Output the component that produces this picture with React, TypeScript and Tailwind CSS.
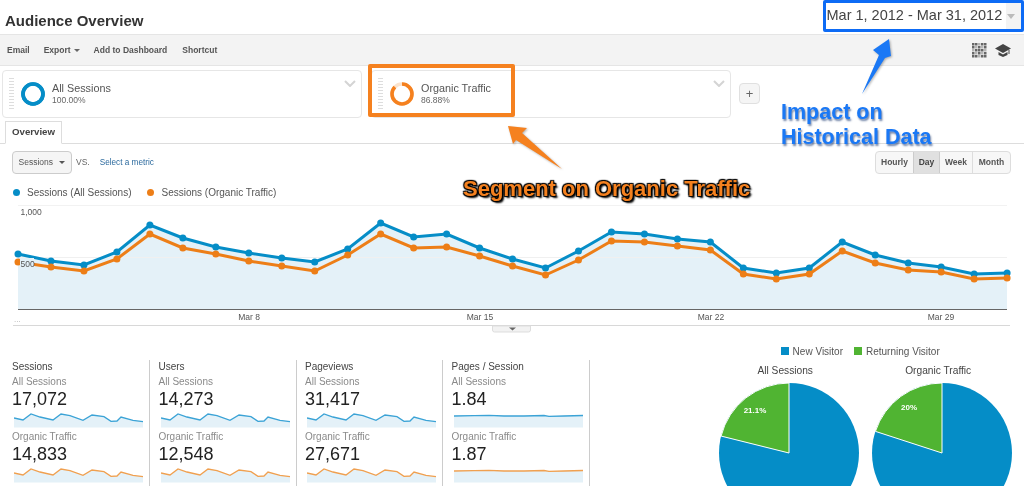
const BLUE = "#058dc7";
const ORANGE = "#ed7e17";

const BLUE_Y = [254, 261, 265, 252, 225, 238, 247, 253, 258, 262, 249, 223, 237, 234, 248, 259, 268, 251, 232, 234, 239, 242, 268, 273, 268, 242, 255, 263, 267, 274, 273];
const ORANGE_Y = [262, 267, 271, 259, 234, 248, 254, 261, 266, 271, 255, 234, 248, 247, 256, 266, 275, 260, 241, 242, 246, 250, 274, 279, 274, 251, 263, 270, 272, 279, 278];

const SPARK: [number, number][] = [[0, 5], [9, 7], [17, 1], [26, 4], [39, 7], [47, 1], [56, 2.7], [69, 7.3], [78, 2], [90, 3.700], [97, 8.3], [103, 8], [107, 4], [119, 7.3], [129, 8.7]];
const FLAT: [number, number][] = [[0, 3], [20, 2.7], [35, 2.3], [50, 3], [70, 3], [90, 2.5], [95, 3.3], [110, 3], [129, 2.5]];

const METRICS = [
  { title: "Sessions", all: "17,072", organic: "14,833", data: SPARK },
  { title: "Users", all: "14,273", organic: "12,548", data: SPARK },
  { title: "Pageviews", all: "31,417", organic: "27,671", data: SPARK },
  { title: "Pages / Session", all: "1.84", organic: "1.87", data: FLAT },
];

// dots of the little grid icon in the toolbar, 0 means a lighter one
const QR = [1, 1, 0, 1, 1, 1, 0, 1, 0, 1, 0, 1, 1, 1, 0, 1, 0, 1, 0, 1, 1, 1, 0, 1, 1];

function xAt(i: number) {
  return 18 + i * 32.97;
}

function points(ys: number[]) {
  return ys.map((y, i) => `${xAt(i)},${y - 205}`).join(" ");
}

function Spark({ data, color }: { data: [number, number][]; color: string }) {
  const line = data.map(([x, y]) => `${x},${y}`).join(" ");
  return (
    <svg width="130" height="15" className="block ml-[2px]">
      <polygon points={`0,14.500 ${line} 129,14.500`} fill="#e4f1f8" />
      <polyline points={line} fill="none" stroke={color} strokeWidth="1.3" />
    </svg>
  );
}

function MetricColumn({ title, all, organic, data }: (typeof METRICS)[number]) {
  return (
    <div className="w-[146.5px] border-r border-[#cccccc] pl-[8.5px] h-[126px]">
      <div className="text-[10px] leading-[14px] text-[#444444]">{title}</div>
      <div className="text-[10px] leading-[16px] text-[#8a8a8a]">All Sessions</div>
      <div className="text-[18px] leading-[18px] text-[#222222]">{all}</div>
      <div className="mt-[5px]">
        <Spark data={data} color="#3ba3d6" />
      </div>
      <div className="mt-[1px] text-[10px] leading-[16px] text-[#8a8a8a]">Organic Traffic</div>
      <div className="text-[18px] leading-[18px] text-[#222222]">{organic}</div>
      <div className="mt-[5px]">
        <Spark data={data} color="#f0a050" />
      </div>
    </div>
  );
}

function Donut({ color, share }: { color: string; share: number }) {
  const c = 2 * Math.PI * 10;
  return (
    <svg width="26" height="26" viewBox="0 0 26 26" className="shrink-0">
      <circle cx="13" cy="13" r="10" fill="none" stroke={share < 1 ? "#fbe3cd" : color} strokeWidth="3.6" />
      <circle
        cx="13"
        cy="13"
        r="10"
        fill="none"
        stroke={color}
        strokeWidth="3.6"
        strokeDasharray={`${c * share} ${c}`}
        transform="rotate(-90 13 13)"
      />
    </svg>
  );
}

function SegmentCard({ name, pct, color, share }: { name: string; pct: string; color: string; share: number }) {
  return (
    <div className="relative w-[360px] h-[48px] border border-[#e6e6e6] rounded-sm flex items-center pl-[6px] gap-[5.5px]">
      <div className="w-[5px] h-[32px] bg-[repeating-linear-gradient(to_bottom,#dddddd_0,#dddddd_1px,transparent_1px,transparent_3px)]" />
      <Donut color={color} share={share} />
      <div className="ml-[1px]">
        <div className="text-[10.8px] leading-[13px] text-[#555555]">{name}</div>
        <div className="text-[8.5px] leading-[11px] text-[#666666]">{pct}</div>
      </div>
      <svg width="12" height="7" className="absolute right-[5px] top-[9px]">
        <path d="M1 1l5 5 5-5" fill="none" stroke="#d4d4d4" strokeWidth="2" />
      </svg>
    </div>
  );
}

function Pie({ title, angle, label, lx, ly }: { title: string; angle: number; label: string; lx: string; ly: string }) {
  const r = 70;
  const a = (angle * Math.PI) / 180;
  const x = 70 - r * Math.sin(a);
  const y = 70 - r * Math.cos(a);
  return (
    <div className="w-[153px] flex flex-col items-center">
      <div className="text-[10.2px] leading-[13px] text-[#444444] mb-[5px] mr-[7px]">{title}</div>
      <svg width="142" height="142" viewBox="-1 -1 142 142" className="shrink-0">
        <circle cx="70" cy="70" r={r} fill={BLUE} />
        <path d={`M70 70L70 0A70 70 0 0 0 ${x} ${y}Z`} fill="#50b432" stroke="#ffffff" strokeWidth="1" />
        <text x={lx} y={ly} fill="#ffffff" fontSize="8" fontWeight="700" textAnchor="middle">
          {label}
        </text>
      </svg>
    </div>
  );
}

export default function App() {
  return (
    <div className="relative w-[1024px] h-[486px] overflow-hidden bg-white font-['Liberation_Sans',Arial,sans-serif] blur-[0.4px]">
      {/* header */}
      <div className="h-[35px] flex items-center pl-[5px] pt-[8px] border-b border-[#e5e5e5]">
        <h1 className="text-[15px] font-bold text-[#333333]">Audience Overview</h1>
      </div>

      {/* toolbar */}
      <div className="h-[31px] bg-[#f3f3f3] border-b border-[#e5e5e5] flex items-center pl-[7px] pr-[13px] text-[8.5px] font-bold text-[#555555]">
        <span>Email</span>
        <span className="ml-[14px]">Export</span>
        <span className="ml-[3px] border-x-[3px] border-t-[3px] border-x-transparent border-t-[#666666]" />
        <span className="ml-[14px]">Add to Dashboard</span>
        <span className="ml-[15px]">Shortcut</span>
        <svg width="15" height="15" viewBox="0 0 15 15" className="ml-auto">
          {QR.map((on, i) => (
            <rect
              key={i}
              x={(i % 5) * 3}
              y={Math.floor(i / 5) * 3}
              width="2.500"
              height="2.500"
              fill={on ? "#666666" : "#b5b5b5"}
            />
          ))}
        </svg>
        <svg width="16" height="13" viewBox="0 0 16 13" className="ml-[8px]">
          <path d="M0 4.500L8 0l8 4.500-8 4.500zM3.500 8l4.500 2.500L12.500 8v3L8 13l-4.500-2z" fill="#444444" />
          <path d="M14 6v4" stroke="#444444" strokeWidth="1" />
        </svg>
      </div>

      {/* segments */}
      <div className="h-[55px] pt-[4px] pl-[2px] flex items-start">
        <SegmentCard name="All Sessions" pct="100.00%" color="#058dc7" share={1} />
        <div className="w-[9px]" />
        <SegmentCard name="Organic Traffic" pct="86.88%" color="#f5811f" share={0.8688} />
        <button className="ml-[8px] mt-[13px] w-[21px] h-[21px] border border-[#e0e0e0] bg-[#f5f5f5] rounded-sm text-[13px] leading-[18px] text-[#666666]">
          +
        </button>
      </div>

      {/* tabs */}
      <div className="h-[23px] pl-[5px] border-b border-[#dddddd] flex">
        <div className="w-[57px] h-[23px] border border-b-white border-[#dddddd] text-center text-[9.7px] font-bold leading-[20px] text-[#444444] bg-white">
          Overview
        </div>
      </div>

      {/* chart controls */}
      <div className="h-[30px] pt-[7px] pl-[12px] pr-[13px] flex items-start">
        <div className="w-[60px] h-[23px] border border-[#cccccc] rounded-sm bg-[#f5f5f5] flex items-center justify-between pl-[5.5px] pr-[6px] text-[8.5px] text-[#555555]">
          Sessions
          <span className="border-x-[3px] border-t-[3px] border-x-transparent border-t-[#555555]" />
        </div>
        <span className="ml-[4px] mt-[5px] text-[8.5px] text-[#666666]">VS.</span>
        <span className="ml-[10px] mt-[6px] text-[8.2px] text-[#2c6a9e]">Select a metric</span>
        <div className="ml-auto flex h-[23px] border border-[#dddddd] rounded-sm bg-[#f7f7f7] text-[8.5px] font-bold text-[#555555] leading-[21px] text-center">
          <span className="w-[37px]">Hourly</span>
          <span className="w-[27px] bg-[#e0e0e0] border-x border-[#cccccc] text-[#444444]">Day</span>
          <span className="w-[33px] border-r border-[#dddddd]">Week</span>
          <span className="w-[37px]">Month</span>
        </div>
      </div>

      {/* legend */}
      <div className="h-[31px] flex items-center gap-[16px] pl-[13px] pt-[6px] text-[10px] text-[#555555]">
        <span className="flex items-center gap-[7px]">
          <span className="w-[7px] h-[7px] rounded-full bg-[#058dc7]" />
          Sessions (All Sessions)
        </span>
        <span className="flex items-center gap-[7px]">
          <span className="w-[7px] h-[7px] rounded-full bg-[#ed7e17]" />
          Sessions (Organic Traffic)
        </span>
      </div>

      {/* main chart */}
      <svg width="1024" height="128" className="block">
        <line x1="18" x2="1007" y1="0.500" y2="0.500" stroke="#f2f2f2" />
        <polygon points={`18,104 ${points(BLUE_Y)} 1007,104`} fill="#e4f1f8" />
        <line x1="18" x2="1007" y1="52.500" y2="52.500" stroke="#f0f0f0" />
        <line x1="18" x2="1007" y1="104.500" y2="104.500" stroke="#666666" />
        <polyline points={points(BLUE_Y)} fill="none" stroke={BLUE} strokeWidth="3" />
        {BLUE_Y.map((y, i) => (
          <circle key={i} cx={xAt(i)} cy={y - 205} r="3.500" fill={BLUE} />
        ))}
        <polyline points={points(ORANGE_Y)} fill="none" stroke={ORANGE} strokeWidth="3" />
        {ORANGE_Y.map((y, i) => (
          <circle key={i} cx={xAt(i)} cy={y - 205} r="3.500" fill={ORANGE} />
        ))}
        <rect x="20" y="53" width="14" height="12" fill="#e4f1f8" />
        <text x="20.500" y="10" fontSize="8.500" fill="#555555">1,000</text>
        <text x="20.500" y="62" fontSize="8.500" fill="#555555">500</text>
        <text x="14" y="117" fontSize="8" fill="#aaaaaa">...</text>
        <g fontSize="8.500" fill="#555555" textAnchor="middle">
          <text x="249" y="115">Mar 8</text>
          <text x="480" y="115">Mar 15</text>
          <text x="711" y="115">Mar 22</text>
          <text x="941" y="115">Mar 29</text>
        </g>
        <line x1="13" x2="1010" y1="120.500" y2="120.500" stroke="#d8d8d8" />
        <path d="M492.500 121h38v4a2 2 0 0 1-2 2h-34a2 2 0 0 1-2-2z" fill="#f2f2f2" stroke="#dddddd" />
        <path d="M509 122.500h7l-3.500 3z" fill="#666666" />
      </svg>

      {/* metrics and pies */}
      <div className="flex pt-[27px] pl-[3.5px]">
        <div className="flex w-[586px]">
          {METRICS.map((m) => (
            <MetricColumn key={m.title} {...m} />
          ))}
        </div>
        <div className="ml-[122.7px] flex flex-col -mt-[16px]">
          <div className="flex justify-center items-center gap-[11px] text-[10px] text-[#555555] h-[14px] w-[306px] mb-[6px] pr-[10px]">
            <span className="flex items-center gap-[4px]">
              <span className="w-[8px] h-[8px] bg-[#058dc7]" />
              New Visitor
            </span>
            <span className="flex items-center gap-[4px]">
              <span className="w-[8px] h-[8px] bg-[#50b432]" />
              Returning Visitor
            </span>
          </div>
          <div className="flex">
            <Pie title="All Sessions" angle={76} label="21.1%" lx="36" ly="30" />
            <Pie title="Organic Traffic" angle={72} label="20%" lx="37" ly="27" />
          </div>
        </div>
      </div>

      {/* annotations drawn over the screenshot */}
      <div className="absolute left-[368px] top-[64px] w-[147px] h-[53px] border-[4px] border-[#f5811f] rounded-[2px]" />
      <div className="absolute left-[823px] top-0 w-[201px] h-[32px] border-[3.5px] border-[#0d6bf5] rounded-[2px] bg-white flex items-center pl-[0.5px]">
        <span className="text-[14.5px] text-[#444444] whitespace-nowrap">Mar 1, 2012 - Mar 31, 2012</span>
        <span className="absolute right-0 top-0 w-[15.5px] h-full bg-[#f3f3f3] flex items-center pl-[1.5px]">
          <span className="border-x-[4.5px] border-t-[5px] border-x-transparent border-t-[#bbbbbb]" />
        </span>
      </div>
      <svg width="1024" height="486" className="absolute inset-0 pointer-events-none drop-shadow-[1px_1px_1px_rgba(0,0,0,0.3)]">
        <polygon points="889,39 891,56 885,58 862,94 879,55 873,50" fill="#1a78f5" />
        <polygon points="508,126 527,128 522,133 562,169 516,140 513,144" fill="#f5811f" />
      </svg>
      <div className="absolute left-[781px] top-[100px] text-[21.5px] leading-[25px] font-bold text-[#1a78f5] whitespace-nowrap [text-shadow:1px_2px_2px_rgba(16,48,106,0.6)]">
        Impact on
        <br />
        Historical Data
      </div>
      <div className="absolute left-[463px] top-[177px] text-[22px] leading-[24px] font-bold text-[#f5811f] whitespace-nowrap [text-shadow:1px_1px_1px_#000,-1px_-1px_1px_#000,1px_-1px_1px_#000,-1px_1px_1px_#000,2px_2px_2px_#000]">
        Segment on Organic Traffic
      </div>
    </div>
  );
}
